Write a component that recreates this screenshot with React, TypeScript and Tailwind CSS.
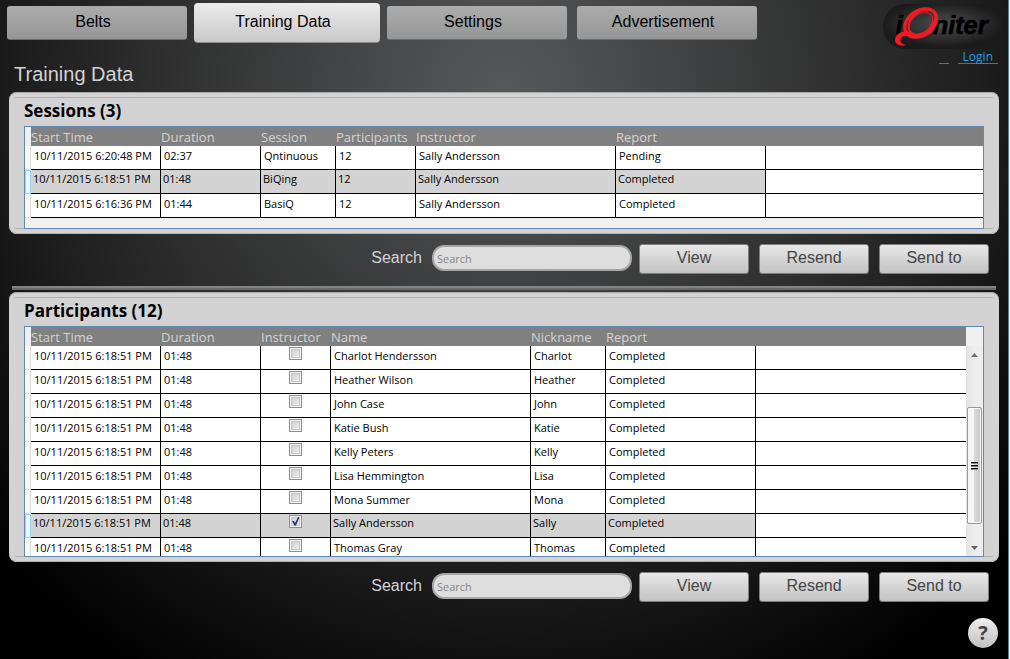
import React from 'react';

type Session = {
    start: string;
    duration: string;
    session: string;
    participants: number;
    instructor: string;
    report: string;
    selected?: boolean;
};

type Participant = {
    name: string;
    nickname: string;
    selected?: boolean;
};

const sessions: Session[] = [
    { start: '10/11/2015 6:20:48 PM', duration: '02:37', session: 'Qntinuous', participants: 12, instructor: 'Sally Andersson', report: 'Pending' },
    { start: '10/11/2015 6:18:51 PM', duration: '01:48', session: 'BiQing', participants: 12, instructor: 'Sally Andersson', report: 'Completed', selected: true },
    { start: '10/11/2015 6:16:36 PM', duration: '01:44', session: 'BasiQ', participants: 12, instructor: 'Sally Andersson', report: 'Completed' },
];

const participants: Participant[] = [
    { name: 'Charlot Hendersson', nickname: 'Charlot' },
    { name: 'Heather Wilson', nickname: 'Heather' },
    { name: 'John Case', nickname: 'John' },
    { name: 'Katie Bush', nickname: 'Katie' },
    { name: 'Kelly Peters', nickname: 'Kelly' },
    { name: 'Lisa Hemmington', nickname: 'Lisa' },
    { name: 'Mona Summer', nickname: 'Mona' },
    { name: 'Sally Andersson', nickname: 'Sally', selected: true },
    { name: 'Thomas Gray', nickname: 'Thomas' },
];

function Tab({ label, active }: { label: string; active?: boolean }) {
    return (
        <button
            type="button"
            className={
                active
                    ? 'mx-[2px] h-10 w-[186px] rounded-[4px] border-b border-[#8c8c8c] bg-linear-to-b from-[#ececec] to-[#c8c8c8] pr-2 pb-px text-base text-black'
                    : 'mx-[5px] h-[34px] w-[180px] rounded-[3px] border-b border-[#6c6c6c] bg-linear-to-b from-[#acacac] to-[#969696] pr-2 pb-px text-base text-black'
            }
        >
            {label}
        </button>
    );
}

function Logo() {
    return (
        <svg className="h-[45px] w-[120px] shrink-0" viewBox="69 12 360 135" role="img" aria-label="iQniter">
            <defs>
                <radialGradient id="pill" cx="50%" cy="45%" r="50%">
                    <stop offset="0" stopColor="#4d4e50" />
                    <stop offset="1" stopColor="#1b1b1c" />
                </radialGradient>
            </defs>
            <rect x="69" y="12" width="360" height="135" rx="66" fill="url(#pill)" />
            <g fontFamily="'Liberation Sans', sans-serif" fontWeight="bold" fontStyle="italic" fontSize="76" fill="#000" stroke="#000" strokeWidth="2">
                <text x="107" y="102">i</text>
                <text x="218" y="102">niter</text>
            </g>
            <g fill="none" stroke="#ee1c25">
                <ellipse cx="182" cy="69" rx="52" ry="37" strokeWidth="10" transform="rotate(-35 182 69)" />
                <ellipse cx="186" cy="66" rx="46" ry="31" strokeWidth="6" transform="rotate(-40 186 66)" />
                <ellipse cx="182" cy="71" rx="41" ry="28" strokeWidth="3" transform="rotate(-42 182 71)" />
            </g>
            <path d="M150 96C130 88 106 102 105 119C105 133 119 140 138 135C126 132 119 126 122 117C125 108 138 105 160 110Z" fill="#ee1c25" />
        </svg>
    );
}

function HeadCell({ children }: { children?: React.ReactNode }) {
    return <th className="h-[19px] overflow-hidden bg-[#808080] p-0 pt-px text-left text-[13px] leading-[18px] font-normal whitespace-nowrap text-[#d3d3d3]">{children}</th>;
}

function RowHeader({ selected }: { selected?: boolean }) {
    return (
        <td
            className={
                selected
                    ? 'h-6 border border-[#9ad7f3] bg-[#e8f6fd] p-0'
                    : 'h-6 border-r border-b border-[#dcdcdc] bg-linear-to-r from-white to-[#f4f4f4] p-0'
            }
        />
    );
}

function Cell({ children, selected, center }: { children?: React.ReactNode; selected?: boolean; center?: boolean }) {
    return (
        <td
            className={`h-6 overflow-hidden border-r border-b border-black p-0 align-top whitespace-nowrap ${center ? 'text-center' : selected ? 'pl-[2px]' : 'pl-[3px]'} ${selected ? 'bg-[#d3d3d3] leading-[18px]' : 'bg-white leading-5'}`}
        >
            {children}
        </td>
    );
}

function FillCell() {
    return <td className="h-6 border-b border-black bg-white p-0" />;
}

function CheckBox({ checked, label }: { checked?: boolean; label: string }) {
    return (
        <span className="relative mx-auto mt-px block size-[13px]">
            <input
                type="checkbox"
                aria-label={label}
                defaultChecked={checked}
                className="peer block size-[13px] appearance-none border border-[#8e8f8f] bg-linear-to-br from-[#c4c8d0] to-[#f6f6f6] shadow-[inset_0_0_0_1px_#f4f4f4,inset_0_0_0_2px_#c3c6cc]"
            />
            <svg className="pointer-events-none absolute inset-0 hidden size-[13px] peer-checked:block" viewBox="0 0 13 13">
                <path d="M3 6L5 6L6 8L9 2L10.5 2L7 10.5L5.5 10.5Z" fill="#2b2f7c" />
            </svg>
        </span>
    );
}

function Panel({ title, children }: { title: string; children: React.ReactNode }) {
    return (
        <section className="mr-[9px] ml-[9px] rounded-lg bg-[#d3d3d3] p-[5px] shadow-[inset_0_1px_0_#a9a9a9,inset_0_-1px_0_#b4b4b4]">
            <div className="rounded-[3px] border-y border-[#adadad] px-[10px]">
                <h2 className="h-7 font-['Open_Sans',sans-serif] text-[17px] leading-[26px] font-bold text-black">{title}</h2>
                <div className="-mb-px flex border border-[#6288b4] bg-[#f0f0f0]">{children}</div>
            </div>
        </section>
    );
}

function SessionsTable() {
    return (
        <div className="w-full pb-[10px]">
            <table className="w-full table-fixed border-separate border-spacing-0 font-['Open_Sans',sans-serif] text-[11px] text-black">
                <colgroup>
                    <col className="w-[6px]" />
                    <col className="w-[130px]" />
                    <col className="w-[100px]" />
                    <col className="w-[75px]" />
                    <col className="w-[80px]" />
                    <col className="w-[200px]" />
                    <col className="w-[150px]" />
                    <col />
                </colgroup>
                <thead>
                    <tr>
                        <td className="bg-[#f0f0f0] p-0" />
                        <HeadCell>Start Time</HeadCell>
                        <HeadCell>Duration</HeadCell>
                        <HeadCell>Session</HeadCell>
                        <HeadCell>Participants</HeadCell>
                        <HeadCell>Instructor</HeadCell>
                        <HeadCell>Report</HeadCell>
                        <HeadCell />
                    </tr>
                </thead>
                <tbody>
                    {sessions.map((s) => (
                        <tr key={s.start}>
                            <RowHeader selected={s.selected} />
                            <Cell selected={s.selected}>{s.start}</Cell>
                            <Cell selected={s.selected}>{s.duration}</Cell>
                            <Cell selected={s.selected}>{s.session}</Cell>
                            <Cell selected={s.selected}>{s.participants}</Cell>
                            <Cell selected={s.selected}>{s.instructor}</Cell>
                            <Cell selected={s.selected}>{s.report}</Cell>
                            <FillCell />
                        </tr>
                    ))}
                </tbody>
            </table>
        </div>
    );
}

function ParticipantsTable() {
    return (
        <>
            <div className="h-[229px] min-w-0 flex-1 overflow-hidden">
                <table className="w-full table-fixed border-separate border-spacing-0 font-['Open_Sans',sans-serif] text-[11px] text-black">
                    <colgroup>
                        <col className="w-[6px]" />
                        <col className="w-[130px]" />
                        <col className="w-[100px]" />
                        <col className="w-[70px]" />
                        <col className="w-[200px]" />
                        <col className="w-[75px]" />
                        <col className="w-[150px]" />
                        <col />
                    </colgroup>
                    <thead>
                        <tr>
                            <td className="bg-[#f0f0f0] p-0" />
                            <HeadCell>Start Time</HeadCell>
                            <HeadCell>Duration</HeadCell>
                            <HeadCell>Instructor</HeadCell>
                            <HeadCell>Name</HeadCell>
                            <HeadCell>Nickname</HeadCell>
                            <HeadCell>Report</HeadCell>
                            <HeadCell />
                        </tr>
                    </thead>
                    <tbody>
                        {participants.map((p) => (
                            <tr key={p.name}>
                                <RowHeader selected={p.selected} />
                                <Cell selected={p.selected}>10/11/2015 6:18:51 PM</Cell>
                                <Cell selected={p.selected}>01:48</Cell>
                                <Cell selected={p.selected} center>
                                    <CheckBox checked={p.selected} label={`${p.name} is instructor`} />
                                </Cell>
                                <Cell selected={p.selected}>{p.name}</Cell>
                                <Cell selected={p.selected}>{p.nickname}</Cell>
                                <Cell selected={p.selected}>Completed</Cell>
                                <FillCell />
                            </tr>
                        ))}
                    </tbody>
                </table>
            </div>
            <ScrollBar />
        </>
    );
}

function ScrollBar() {
    return (
        <div className="flex w-[17px] flex-col pt-[19px]">
            <div className="flex flex-1 flex-col items-center bg-linear-to-r from-[#e3e3e3] via-[#ededed] to-[#eeeeee]">
                <button type="button" aria-label="Scroll up" className="flex h-[17px] w-full items-center justify-center">
                    <svg className="h-1 w-[7px]" viewBox="0 0 7 4">
                        <path d="M3.5 0L7 4H0Z" fill="#707070" />
                    </svg>
                </button>
                <div className="mt-11 flex h-[117px] w-[15px] flex-col items-center justify-center gap-px rounded-[2px] border border-[#979797] bg-linear-to-r from-[#f5f5f5] from-45% via-[#dadadb] via-50% to-[#c6c7ca] shadow-[inset_0_0_0_1px_#f8f8f8]">
                    <span className="h-[2px] w-[7px] border-t border-black bg-[#888888]" />
                    <span className="h-[2px] w-[7px] border-t border-black bg-[#888888]" />
                    <span className="h-[2px] w-[7px] border-t border-black bg-[#888888]" />
                </div>
                <button type="button" aria-label="Scroll down" className="mt-auto flex h-[17px] w-full items-center justify-center">
                    <svg className="h-1 w-[7px]" viewBox="0 0 7 4">
                        <path d="M0 0H7L3.5 4Z" fill="#606060" />
                    </svg>
                </button>
            </div>
        </div>
    );
}

function ActionButton({ label }: { label: string }) {
    return (
        <button type="button" className="h-[30px] w-[110px] rounded-[3px] border border-[#7e7e7e] bg-linear-to-b from-[#e8e8e8] to-[#c2c2c2] pb-[3px] text-base leading-6 text-[#444444]">
            {label}
        </button>
    );
}

function ActionBar({ id }: { id: string }) {
    return (
        <div className="mt-[10px] flex items-center justify-end pr-[19px]">
            <label htmlFor={id} className="mr-[10px] pb-[3px] text-base leading-6 text-[#d3d3d3]">Search</label>
            <input
                id={id}
                type="text"
                placeholder="Search"
                className="mr-[7px] mb-[2px] h-[26px] w-[200px] rounded-xl border-2 border-[#a6a6a6] bg-[#dedede] pl-[3px] font-['Open_Sans',sans-serif] text-[11px] text-black placeholder:text-[#858585]"
            />
            <div className="flex gap-[10px]">
                <ActionButton label="View" />
                <ActionButton label="Resend" />
                <ActionButton label="Send to" />
            </div>
        </div>
    );
}

export default function App() {
    return (
        <div className="min-h-screen bg-[#e3edf8] pr-px font-['Liberation_Sans',sans-serif]">
            <div className="min-h-screen border-r border-[#5f7fa6] bg-[radial-gradient(circle_690px_at_50%_90px,#57585b_0%,#454647_22%,#1f1f1f_68%,#111111_82%,#000000_100%)]">
                <header className="flex items-start justify-between pr-[5px] pl-[2px]">
                    <nav className="flex items-center pt-[3px]">
                        <Tab label="Belts" />
                        <Tab label="Training Data" active />
                        <Tab label="Settings" />
                        <Tab label="Advertisement" />
                    </nav>
                    <div className="flex h-16 flex-col items-end pt-1">
                        <Logo />
                        <div className="mr-[5px] flex gap-[9px] font-['Open_Sans',sans-serif] text-xs leading-[14px] text-[#1e9fe8]">
                            <a href="#" aria-label="Account" className="w-[10px] border-b border-[#1786b8]" />
                            <a href="#" className="border-b border-[#1786b8] px-[5px] pt-px leading-[13px]">Login</a>
                        </div>
                    </div>
                </header>
                <h1 className="h-7 pl-[14px] text-xl leading-5 text-[#d3d3d3]">Training Data</h1>

                <Panel title="Sessions (3)">
                    <SessionsTable />
                </Panel>
                <ActionBar id="session-search" />

                <hr className="mt-3 mr-3 mb-[2px] ml-3 h-1 border-t-2 border-b-2 border-t-[#838384] border-b-[#6a6a6c]" />

                <Panel title="Participants (12)">
                    <ParticipantsTable />
                </Panel>
                <ActionBar id="participant-search" />

                <div className="flex justify-end pt-4 pr-[10px]">
                    <button type="button" aria-label="Help" className="size-[30px] rounded-full bg-linear-to-b from-[#eeeeee] to-[#c0c0c0] font-['Open_Sans',sans-serif] text-xl leading-[30px] font-bold text-[#444444]">
                        ?
                    </button>
                </div>
            </div>
        </div>
    );
}
